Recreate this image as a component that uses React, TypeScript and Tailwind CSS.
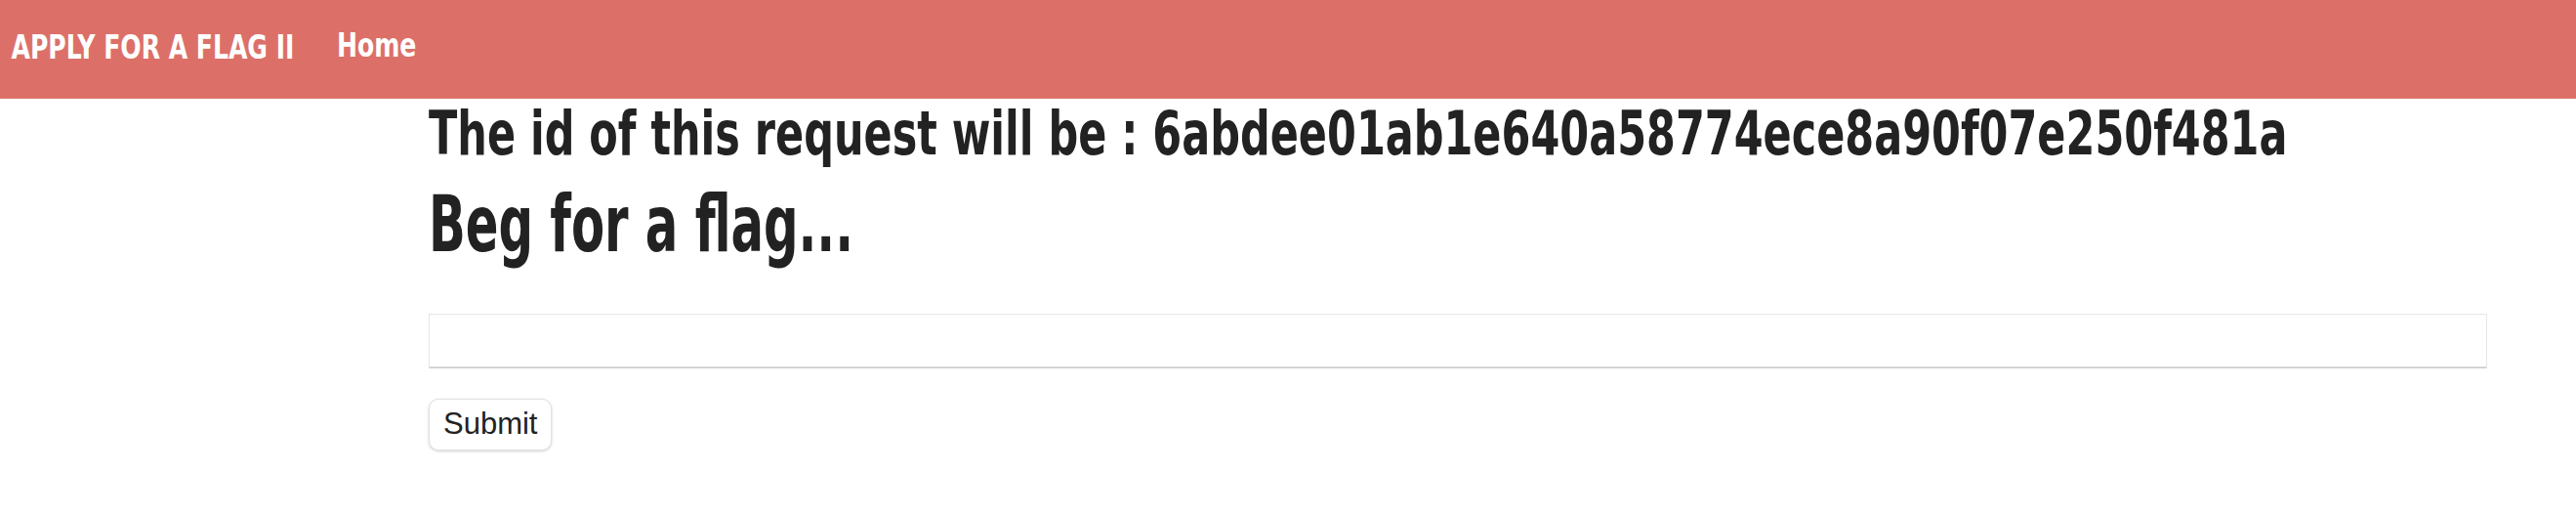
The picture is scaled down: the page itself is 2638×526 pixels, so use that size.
import React from "react";

const cond = { fontFamily: '"Liberation Sans Narrow", "DejaVu Sans Condensed", "Liberation Sans", sans-serif' };

const App = () => {
  return (
    <div className="min-h-[526px] bg-white overflow-hidden">
      <nav className="h-[101px] bg-[#dc7069] flex items-start">
        <a className="inline-block origin-left scale-x-[0.82] text-white font-bold text-[34px] leading-none pl-[14px] pt-[31px] whitespace-nowrap" style={cond}>
          APPLY FOR A FLAG II
        </a>
        <a className="inline-block origin-left scale-x-[0.82] text-white font-bold text-[34px] leading-none ml-[-22px] pt-[29px]" style={cond}>
          Home
        </a>
      </nav>
      <div className="ml-[439px] w-[2108px]">
        <h2 className="text-[#222222] font-bold text-[62px] leading-[1.1] mt-[2px] whitespace-nowrap origin-left scale-x-[0.77]" style={cond}>
          The id of this request will be : 6abdee01ab1e640a58774ece8a90f07e250f481a
        </h2>
        <h1 className="text-[#222222] font-bold text-[80px] leading-[1.1] mt-[15px] whitespace-nowrap origin-left scale-x-[0.69]" style={cond}>
          Beg for a flag...
        </h1>
        <form className="mt-[47px]">
          <input
            type="text"
            className="block w-full h-[56px] border border-[#e6e6e6] border-b-[#cccccc] shadow-[inset_0_-1px_0_#dddddd] outline-none"
          />
          <button
            type="button"
            className="mt-[31px] h-[53px] px-[14px] rounded-[10px] border border-[#e2e2e2] bg-white shadow-[0_1px_3px_rgba(0,0,0,0.18)] text-[31px] text-[#222222]"
            style={{ fontFamily: '"Liberation Sans", Arial, sans-serif' }}
          >
            Submit
          </button>
        </form>
      </div>
    </div>
  );
};

export default App;
